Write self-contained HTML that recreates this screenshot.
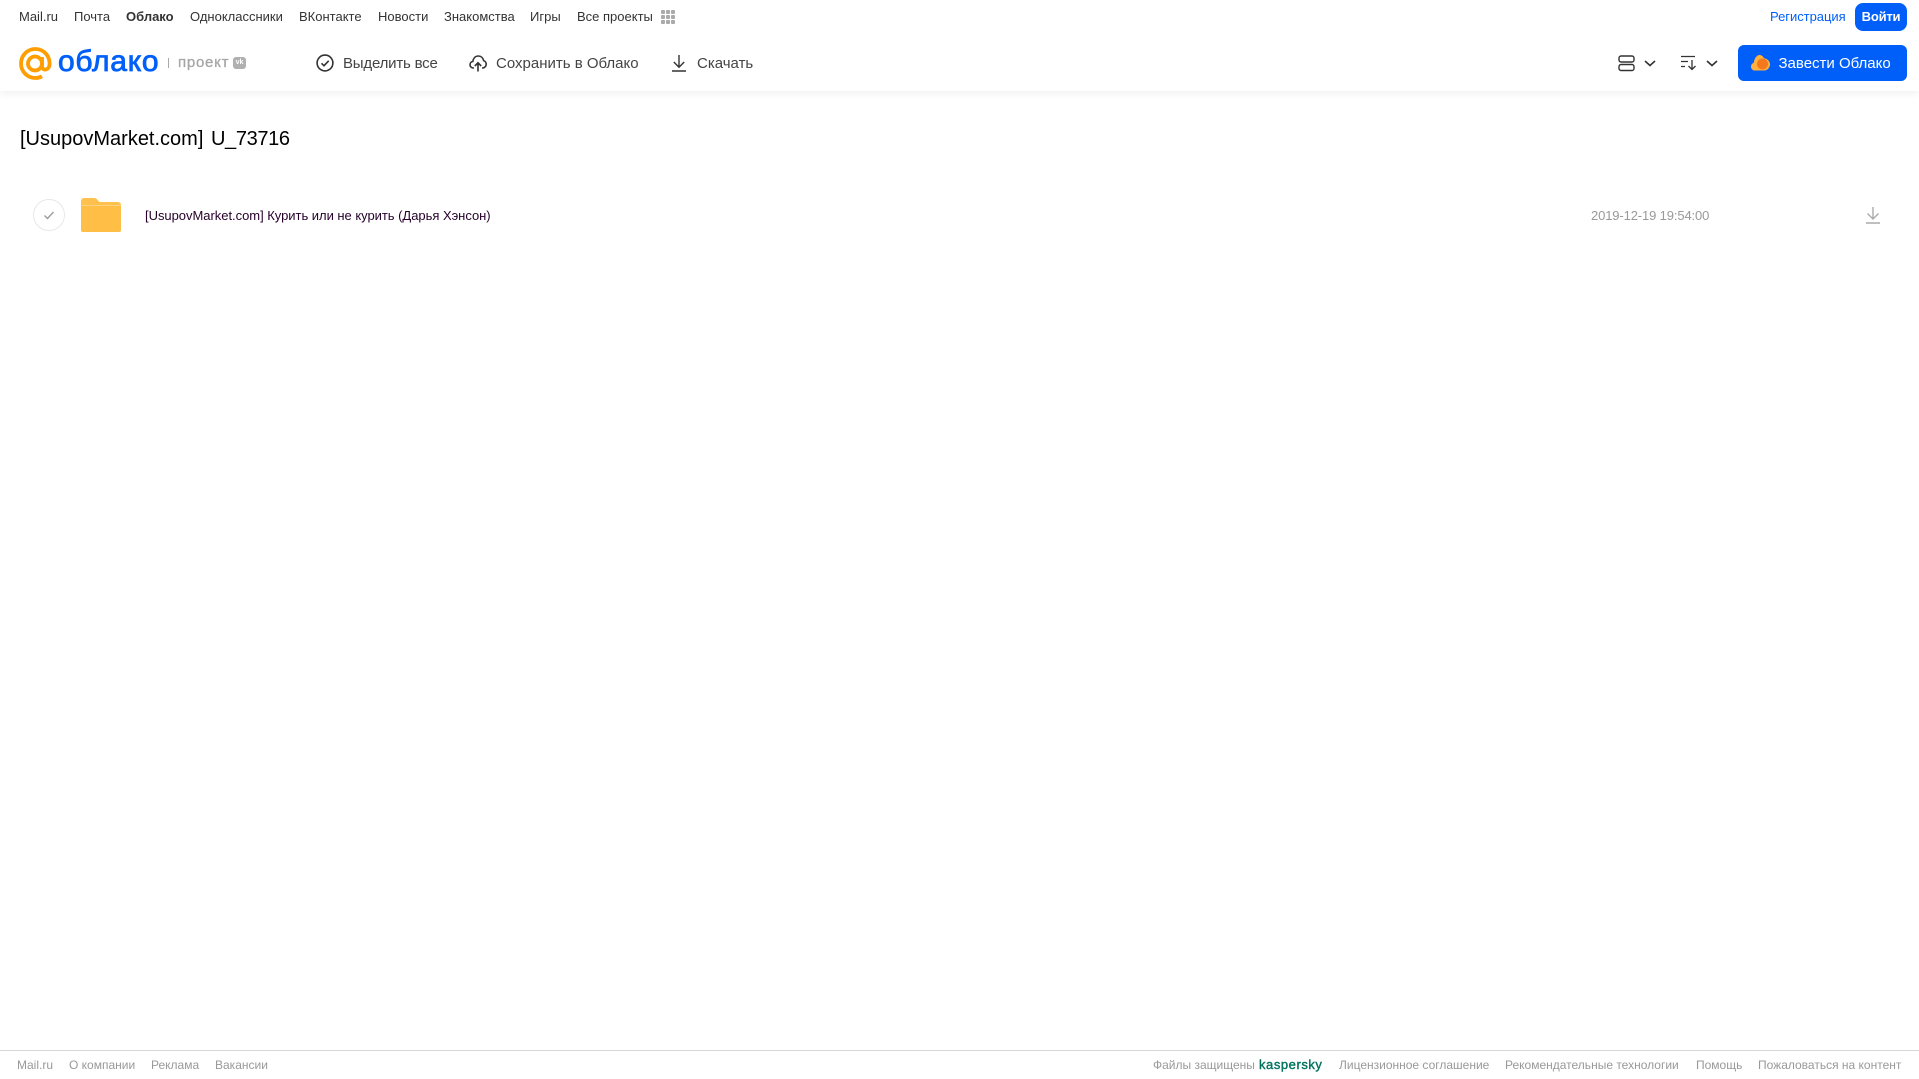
<!DOCTYPE html>
<html lang="ru"><head><meta charset="utf-8"><title>Облако</title>
<style>
html,body{margin:0;padding:0;background:#fff}
body{width:1919px;height:1079px;position:relative;overflow:hidden;font-family:"Liberation Sans",Arial,sans-serif}
.t{position:absolute;white-space:nowrap;line-height:20px;height:20px}
.n{font-size:13px;top:7px;color:#333}
.a{font-size:15px;top:54px;color:#444}
.f{font-size:12px;top:1055px;color:#999}
svg{position:absolute;overflow:visible}
#hd{position:absolute;left:0;top:0;width:1919px;height:91px;background:#fff;box-shadow:0 2px 8px rgba(0,0,0,.07)}
</style></head><body>
<div id="hd"></div>
<span class="t n" style="left:19px">Mail.ru</span>
<span class="t n" style="left:74px">Почта</span>
<span class="t n" style="left:126px;font-weight:bold">Облако</span>
<span class="t n" style="left:190px">Одноклассники</span>
<span class="t n" style="left:299px">ВКонтакте</span>
<span class="t n" style="left:378px">Новости</span>
<span class="t n" style="left:444px">Знакомства</span>
<span class="t n" style="left:530px">Игры</span>
<span class="t n" style="left:577px">Все проекты</span>
<svg style="left:661px;top:10px" width="14" height="14" fill="#aaa"><rect width="4" height="4" rx="1"/><rect x="5" width="4" height="4" rx="1"/><rect x="10" width="4" height="4" rx="1"/><rect y="5" width="4" height="4" rx="1"/><rect x="5" y="5" width="4" height="4" rx="1"/><rect x="10" y="5" width="4" height="4" rx="1"/><rect y="10" width="4" height="4" rx="1"/><rect x="5" y="10" width="4" height="4" rx="1"/><rect x="10" y="10" width="4" height="4" rx="1"/></svg>

<svg style="left:19px;top:47px" width="33" height="33" viewBox="0 0 33 33" fill="none" stroke="#ff9e00" stroke-width="3.800"><circle cx="16" cy="16.500" r="7"/><path d="M23 10v9c0 5.200 7.600 5 7.600-2.500C30.600 8.500 24.500 2 16.300 2 8.300 2 2 8.500 2 16.500S8.300 31 16.300 31c2.600 0 4.800-.6 6.700-1.700"/></svg>
<span class="t" style="left:58px;top:49px;height:26px;line-height:26px;font-size:30px;color:#005ff9;letter-spacing:.75px;-webkit-text-stroke:.8px #005ff9">облако</span>
<div style="position:absolute;left:168px;top:58px;width:1px;height:10px;background:#aaa"></div>
<span class="t" style="left:178px;top:53px;font-size:15px;color:#a6a6a6;letter-spacing:.75px;-webkit-text-stroke:.3px #a6a6a6">проект</span>
<div style="position:absolute;left:233px;top:57px;width:13px;height:12px;border-radius:3px;background:#b0b0b0;color:#fff;font:bold 7px/12px 'Liberation Sans',sans-serif;text-align:center">vk</div>

<svg style="left:316px;top:54px" width="18" height="18" fill="none" stroke="#333" stroke-width="1.600"><circle cx="9" cy="9" r="7.900"/><path d="M5.500 9.300l2.500 2.400 4.700-4.900"/></svg>
<span class="t a" style="left:343px;letter-spacing:-.2px">Выделить все</span>
<svg style="left:469px;top:55px" width="18" height="17" fill="none" stroke="#333" stroke-width="1.600"><path d="M5 13H4.500C2.500 13 1 11.500 1 9.700c0-1.700 1.200-3 2.800-3.200C4.300 3.300 6.300 1 9.300 1c2.800 0 4.800 2 5.300 4.600 1.500.4 2.600 1.900 2.600 3.600 0 2-1.500 3.800-3.700 3.800H13"/><path d="M9 16.500V8M5.800 11L9 7.800l3.200 3.200"/></svg>
<span class="t a" style="left:496px">Сохранить в Облако</span>
<svg style="left:672px;top:55px" width="14" height="17" fill="none" stroke="#333" stroke-width="1.400"><path d="M7 0v12M1.800 7L7 12.200 12.200 7M0 16h14"/></svg>
<span class="t a" style="left:697px">Скачать</span>

<svg style="left:1618px;top:55px" width="17" height="16" fill="none" stroke="#333" stroke-width="1.400"><rect x="1" y="1" width="15" height="6" rx="2"/><rect x="1" y="9.500" width="15" height="6" rx="2"/></svg>
<svg style="left:1644px;top:60px" width="12" height="7" fill="none" stroke="#333" stroke-width="1.600"><path d="M1 1l5 4.500L11 1"/></svg>
<svg style="left:1681px;top:55px" width="17" height="16" fill="none" stroke="#333" stroke-width="1.300"><path d="M0 1.500h14M0 6.500h7M0 11.500h4M11 5v9.500M7.500 11l3.500 3.500 3.500-3.500"/></svg>
<svg style="left:1706px;top:60px" width="12" height="7" fill="none" stroke="#333" stroke-width="1.600"><path d="M1 1l5 4.500L11 1"/></svg>

<span class="t" style="left:1770px;top:7px;font-size:13px;color:#005ff9;letter-spacing:-.03px">Регистрация</span>
<div class="t" style="left:1855px;top:3px;width:52px;height:28px;line-height:27px;border-radius:8px;background:#005ff9;color:#fff;font-size:13px;font-weight:bold;letter-spacing:-.2px;text-align:center">Войти</div>
<div style="position:absolute;left:1738px;top:45px;width:169px;height:36px;border-radius:6px;background:#005ff9"></div>
<svg style="left:1751px;top:55px" width="19" height="16"><path d="M4 15.500C1.800 15.500 0 13.800 0 11.600 0 9.700 1.200 8.300 2.800 7.700 3.300 3.500 5.700 0 8.500 0c2.200 0 3.700 1.500 4.500 3.200 3.300.3 6 2.900 6 6.200 0 3.400-2.700 6.100-6 6.100z" fill="#ffb13c"/><circle cx="11.500" cy="9" r="5.500" fill="#f5781e"/></svg>
<span class="t" style="left:1778.500px;top:54px;font-size:15px;color:#fff">Завести Облако</span>

<span class="t" style="left:20px;top:129px;font-size:20px;color:#000;word-spacing:2px">[UsupovMarket.com] <span style="letter-spacing:-.35px">U_73716</span></span>

<svg style="left:32px;top:198px" width="34" height="34" fill="none"><circle cx="17" cy="17" r="15.500" stroke="#e8e8e8"/><path d="M12.500 17.500l3 3 6-6.500" stroke="#999" stroke-width="1.300"/></svg>
<svg style="left:81px;top:198px" width="40" height="34"><path d="M3 0h10c2 0 3 1 4 2.500L18.500 4H37a3 3 0 0 1 3 3v24a3 3 0 0 1-3 3H3a3 3 0 0 1-3-3V3a3 3 0 0 1 3-3z" fill="#ffc14e"/><rect y="7" width="40" height="27" rx="2" fill="#ffbe45"/><rect y="7" width="40" height="1" fill="#ffd27f"/></svg>
<span class="t" style="left:145px;top:206px;font-size:13px;color:#26002b;letter-spacing:-.03px">[UsupovMarket.com] Курить или не курить (Дарья Хэнсон)</span>
<span class="t" style="left:1591px;top:206px;font-size:13px;color:#999;letter-spacing:-.13px">2019-12-19 19:54:00</span>
<svg style="left:1866px;top:207px" width="14" height="17" fill="none" stroke="#aaa" stroke-width="1.400"><path d="M7 0v12M1.500 6.500L7 12l5.500-5.500M0 16h14"/></svg>

<div style="position:absolute;left:0;top:1050px;width:1919px;height:1px;background:#d8d8d8"></div>
<span class="t f" style="left:17px">Mail.ru</span>
<span class="t f" style="left:69px">О компании</span>
<span class="t f" style="left:151px">Реклама</span>
<span class="t f" style="left:215px">Вакансии</span>
<span class="t f" style="left:1153px">Файлы защищены</span>
<span class="t f" style="left:1259px;font-size:13px;color:#00745f;letter-spacing:.55px;-webkit-text-stroke:.4px #00745f">kaspersky</span>
<span class="t f" style="left:1339px">Лицензионное соглашение</span>
<span class="t f" style="left:1505px">Рекомендательные технологии</span>
<span class="t f" style="left:1696px">Помощь</span>
<span class="t f" style="left:1758px">Пожаловаться на контент</span>
</body></html>
